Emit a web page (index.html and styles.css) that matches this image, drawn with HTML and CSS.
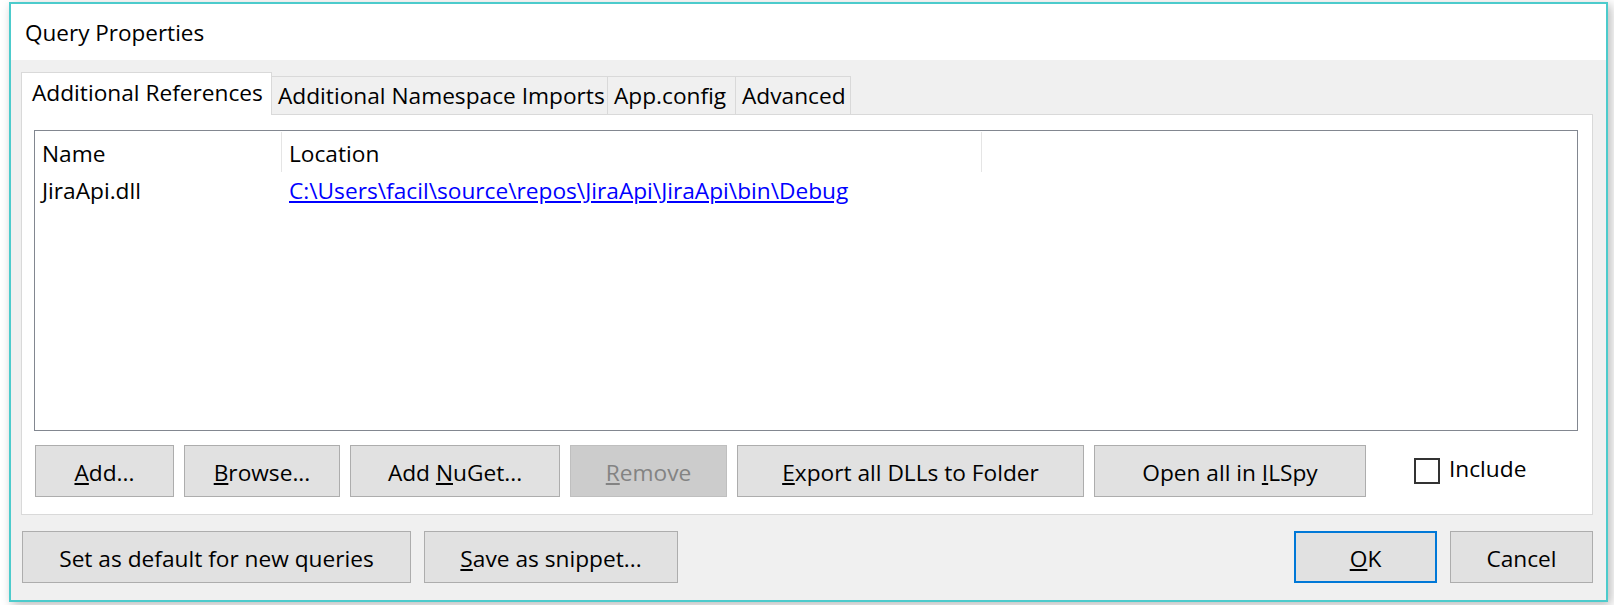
FILE: index.html
```html
<!DOCTYPE html>
<html>
<head>
<meta charset="utf-8">
<title>Query Properties</title>
<link rel="stylesheet" href="styles.css">
</head>
<body>
<div class="dialog">
  <div class="titlebar">Query Properties</div>
  <div class="client">
    <div class="tabs">
      <div class="tab active w-refs">Additional References</div>
      <div class="tab w-ns">Additional Namespace Imports</div>
      <div class="tab w-app">App.config</div>
      <div class="tab w-adv">Advanced</div>
    </div>
    <div class="panel">
      <div class="list">
        <div class="list-header">
          <div class="col col-name">Name</div>
          <div class="col col-loc">Location</div>
        </div>
        <div class="list-row">
          <div class="col col-name">JiraApi.dll</div>
          <div class="col col-loc"><a class="link" href="#">C:\Users\facil\source\repos\JiraApi\JiraApi\bin\Debug</a></div>
        </div>
      </div>
      <div class="btn-row">
        <button class="btn b-add"><u>A</u>dd...</button>
        <button class="btn b-browse"><u>B</u>rowse...</button>
        <button class="btn b-nuget">Add <u>N</u>uGet...</button>
        <button class="btn b-remove" disabled><u>R</u>emove</button>
        <button class="btn b-export"><u>E</u>xport all DLLs to Folder</button>
        <button class="btn b-ilspy">Open all in <u>I</u>LSpy</button>
        <label class="check"><span class="box"></span><span class="check-text">Include</span></label>
      </div>
    </div>
    <div class="footer">
      <div class="footer-group">
        <button class="btn btn-foot b-default">Set as default for new queries</button>
        <button class="btn btn-foot b-snippet"><u>S</u>ave as snippet...</button>
      </div>
      <div class="footer-group">
        <button class="btn btn-foot b-ok"><u>O</u>K</button>
        <button class="btn btn-foot b-cancel">Cancel</button>
      </div>
    </div>
  </div>
</div>
</body>
</html>
```

FILE: styles.css
```css
* { box-sizing: border-box; }

html, body {
  margin: 0;
  padding: 0;
}

body {
  width: 1614px;
  height: 605px;
  overflow: hidden;
  background: #ffffff;
  font-family: "Open Sans", "Noto Sans", sans-serif;
  font-size: 22.7px;
  color: #000;
}

.dialog {
  margin: 2px 0 0 9px;
  width: 1599px;
  height: 600px;
  border: 2px solid #4ccbcc;
  background: #f0f0f0;
  display: flex;
  flex-direction: column;
  box-shadow: 3px 3px 10px rgba(0, 0, 0, 0.28);
}

.titlebar {
  height: 56px;
  flex: none;
  background: #fff;
  padding-left: 14px;
  display: flex;
  align-items: center;
  font-size: 22.5px;
}

.client {
  flex: 1;
  padding: 12px 13px 17px 10px;
  display: flex;
  flex-direction: column;
}

.tabs {
  height: 42px;
  flex: none;
  display: flex;
  align-items: flex-end;
}

.tab {
  height: 38px;
  line-height: 38px;
  background: #f0f0f0;
  border-top: 1px solid #d9d9d9;
  border-right: 1px solid #d9d9d9;
  white-space: nowrap;
  padding-left: 6px;
}

.tab.active {
  height: 43px;
  margin-bottom: -1px;
  background: #fff;
  border-left: 1px solid #d9d9d9;
  line-height: 37px;
  padding-top: 1px;
  padding-left: 10px;
  position: relative;
  z-index: 1;
}

.w-refs { width: 251px; }
.w-ns { width: 336px; }
.w-app { width: 128px; }
.w-adv { width: 115px; }

.panel {
  height: 401px;
  flex: none;
  background: #fff;
  border: 1px solid #d9d9d9;
  padding: 15px 14px 0 12px;
}

.list {
  height: 301px;
  border: 1px solid #828790;
  background: #fff;
}

.list-header {
  height: 41px;
  padding-top: 1px;
  display: flex;
}

.list-header .col {
  height: 40px;
  line-height: 39px;
  padding-top: 2px;
  border-right: 1px solid #e5e5e5;
}

.list-row {
  height: 38px;
  line-height: 38px;
  display: flex;
}

.col {
  padding-left: 7px;
  white-space: nowrap;
}

.col-name { width: 247px; }
.col-loc { width: 700px; }

.link {
  color: #0000ff;
  text-decoration: underline;
}

.btn-row {
  margin-top: 14px;
  margin-left: 1px;
  height: 52px;
  display: flex;
  align-items: center;
  gap: 10px;
}

.btn {
  height: 52px;
  background: #e1e1e1;
  border: 1px solid #adadad;
  font-family: inherit;
  font-size: 22.7px;
  color: #000;
  padding: 3px 0 0 0;
  margin: 0;
  white-space: nowrap;
}

.btn-foot {
  padding-top: 3px;
}

.btn:disabled {
  background: #cccccc;
  border-color: #bfbfbf;
  color: #838383;
}

.b-add { width: 139px; }
.b-browse { width: 156px; }
.b-nuget { width: 210px; }
.b-remove { width: 157px; }
.b-export { width: 347px; }
.b-ilspy { width: 272px; }

.check {
  margin-left: 38px;
  display: flex;
  align-items: center;
  gap: 9px;
}

.check-text {
  padding-bottom: 6px;
}

.box {
  width: 26px;
  height: 26px;
  border: 2px solid #333;
  background: #fff;
  display: block;
}

.footer {
  margin-top: 16px;
  margin-left: 1px;
  display: flex;
  justify-content: space-between;
}

.footer-group {
  display: flex;
  gap: 13px;
}

.b-default { width: 389px; }
.b-snippet { width: 254px; }
.b-ok { width: 143px; border: 2px solid #0078d7; }
.b-cancel { width: 143px; }
```
